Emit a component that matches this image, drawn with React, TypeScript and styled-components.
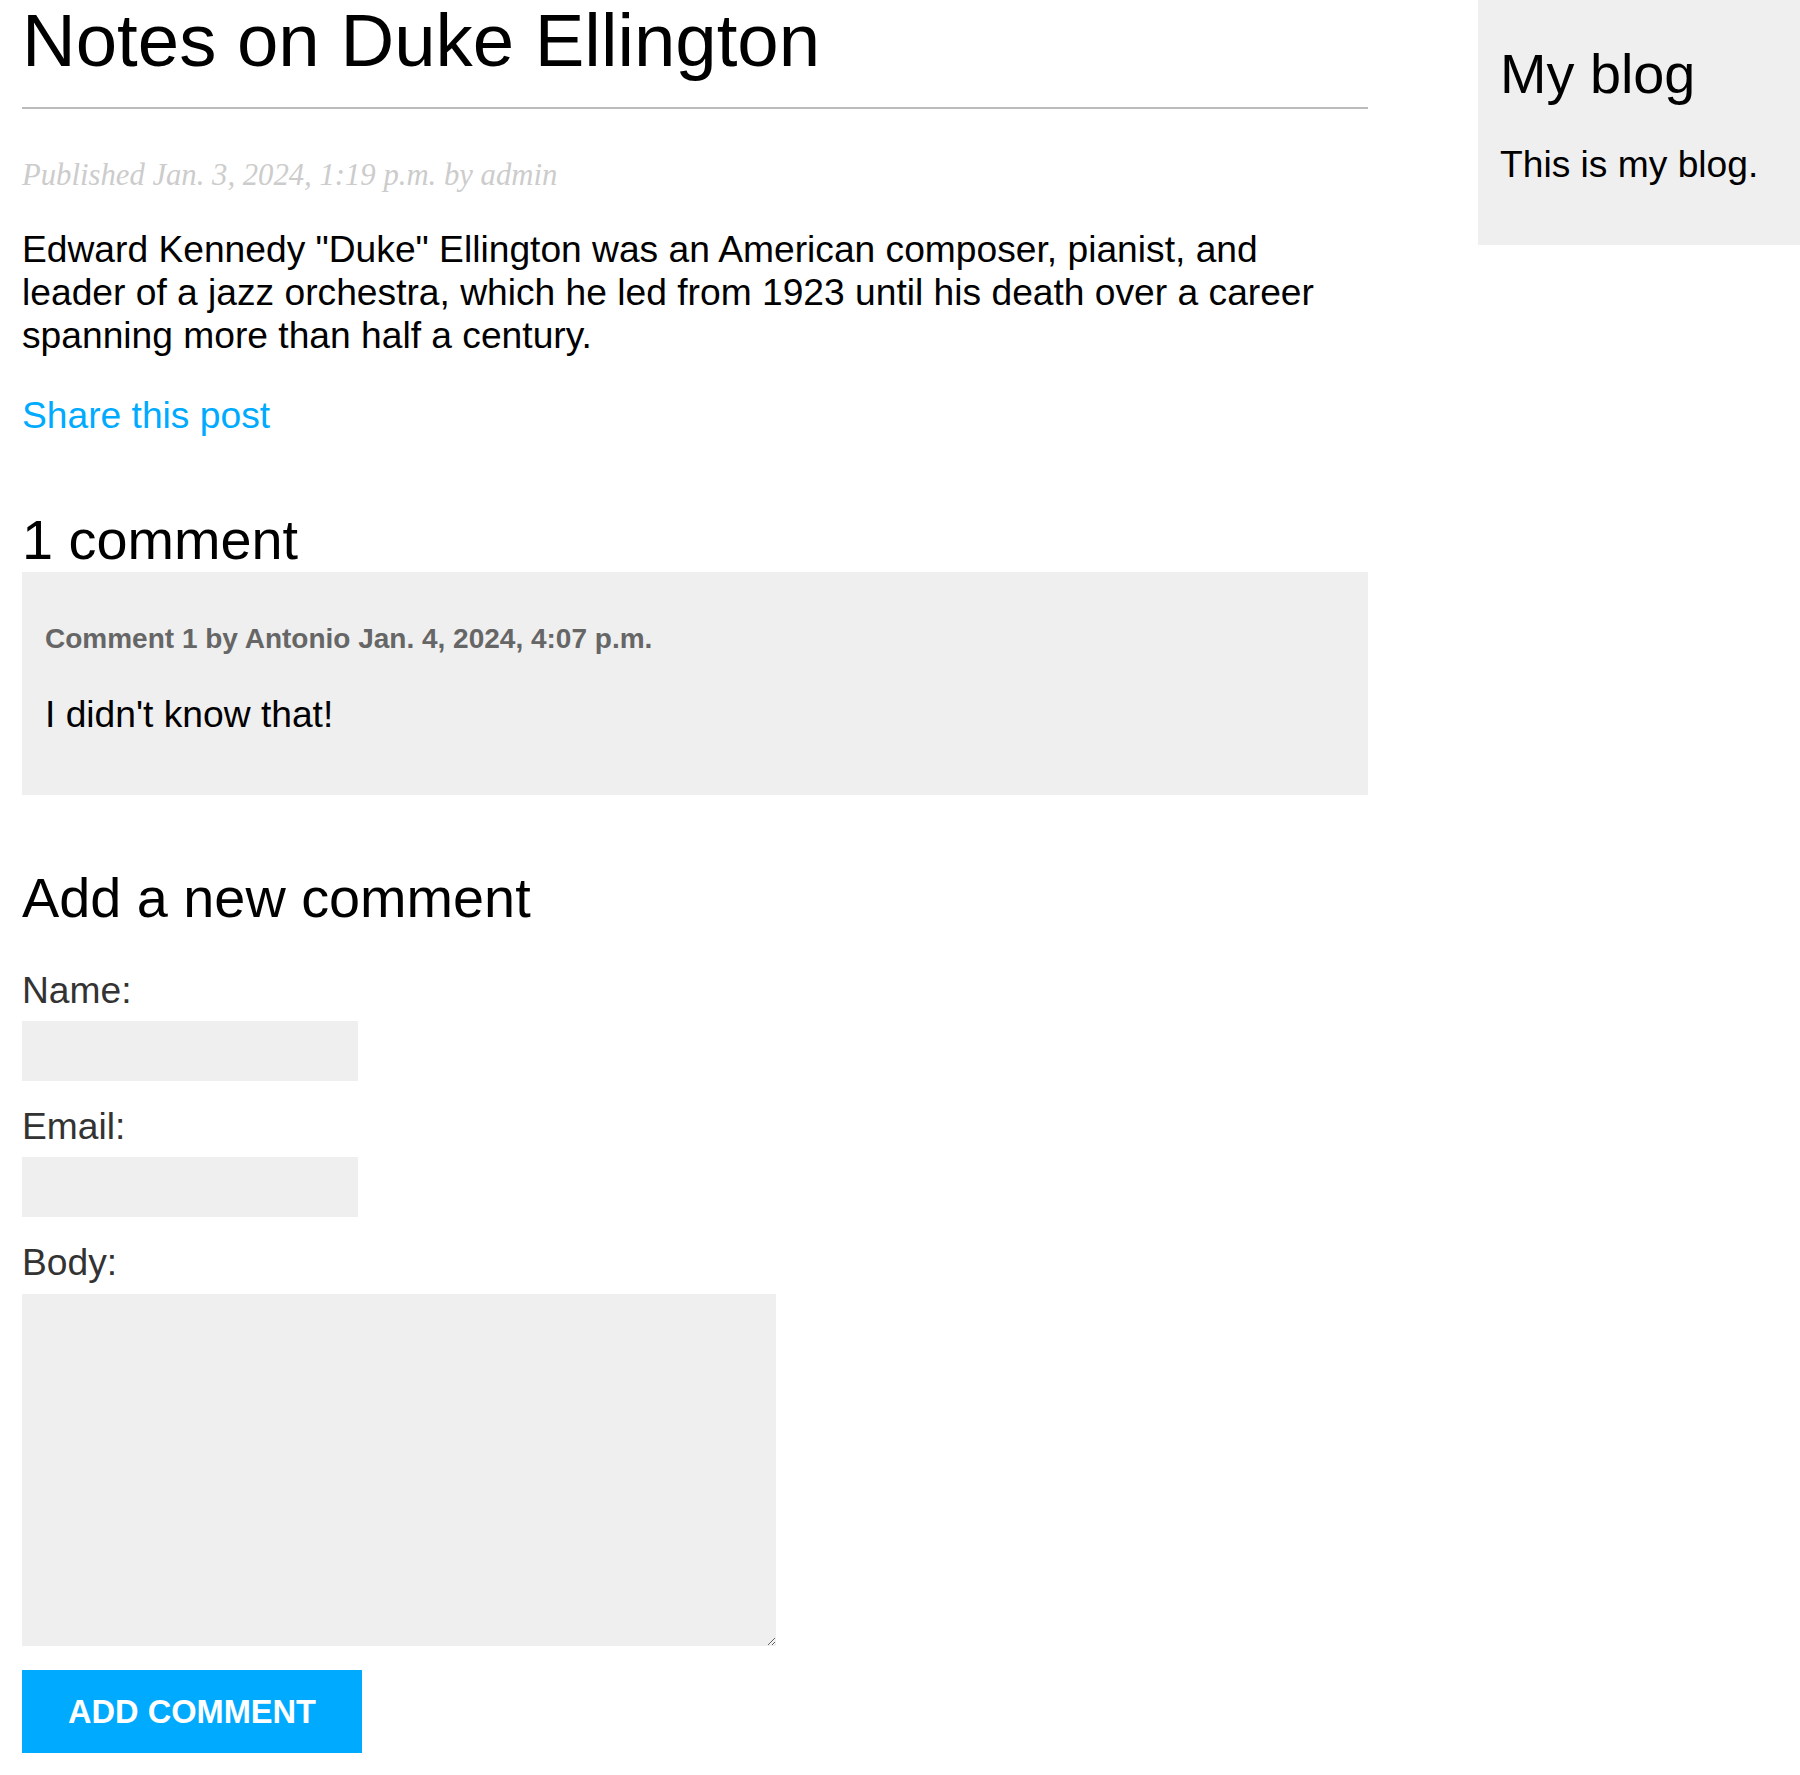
import React from 'react';
import styled, { createGlobalStyle } from 'styled-components';

const GlobalStyle = createGlobalStyle`
  body {
    margin: 0;
    padding: 0;
    background: #fff;
    font-family: 'Liberation Sans', Arial, Helvetica, sans-serif;
    color: #000;
  }
`;

export default function App() {
  return (
    <>
      <GlobalStyle />
      <Page>
        <Content>
          <Title>Notes on Duke Ellington</Title>
          <DateLine>Published Jan. 3, 2024, 1:19 p.m. by admin</DateLine>
          <Body>
            Edward Kennedy "Duke" Ellington was an American composer, pianist,
            and leader of a jazz orchestra, which he led from 1923 until his
            death over a career spanning more than half a century.
          </Body>
          <ShareLink href="#">Share this post</ShareLink>

          <Heading>1 comment</Heading>
          <Comment>
            <CommentInfo>Comment 1 by Antonio Jan. 4, 2024, 4:07 p.m.</CommentInfo>
            <CommentBody>I didn't know that!</CommentBody>
          </Comment>

          <Heading>Add a new comment</Heading>
          <Form onSubmit={(e) => e.preventDefault()}>
            <Label htmlFor="name">Name:</Label>
            <TextInput id="name" type="text" />
            <Label htmlFor="email">Email:</Label>
            <TextInput id="email" type="email" />
            <Label htmlFor="body">Body:</Label>
            <TextArea id="body" />
            <SubmitButton type="submit">Add comment</SubmitButton>
          </Form>
        </Content>

        <Sidebar>
          <SidebarTitle>My blog</SidebarTitle>
          <SidebarText>This is my blog.</SidebarText>
        </Sidebar>
      </Page>
    </>
  );
}

const Page = styled.div`
  display: flex;
  justify-content: space-between;
  align-items: flex-start;
  padding-left: 22px;
  width: 1800px;
  box-sizing: border-box;
`;

const Content = styled.main`
  width: 1346px;
  display: flex;
  flex-direction: column;
  align-items: flex-start;
  padding-bottom: 23px;
`;

const Title = styled.h1`
  align-self: stretch;
  margin: 0;
  font-size: 74.4px;
  line-height: 82px;
  font-weight: normal;
  padding-bottom: 25px;
  border-bottom: 2px solid #bbb;
`;

const DateLine = styled.p`
  margin: 48px 0 0;
  font-family: 'Liberation Serif', Georgia, serif;
  font-style: italic;
  font-size: 30.7px;
  line-height: 36px;
  color: #ccc;
`;

const Body = styled.p`
  margin: 35px 0 0;
  font-size: 37.2px;
  line-height: 43px;
`;

const ShareLink = styled.a`
  margin-top: 37px;
  font-size: 37.2px;
  line-height: 43px;
  color: #00abff;
  text-decoration: none;
`;

const Heading = styled.h2`
  margin: 71px 0 1px;
  font-size: 55.8px;
  line-height: 63px;
  font-weight: normal;
`;

const Comment = styled.div`
  align-self: stretch;
  background: #efefef;
  padding: 22px 23px 23px;
  height: 223px;
  box-sizing: border-box;
`;

const CommentInfo = styled.p`
  margin: 29px 0 0;
  font-size: 28px;
  line-height: 32px;
  font-weight: bold;
  color: #666;
`;

const CommentBody = styled.p`
  margin: 38px 0 0;
  font-size: 37.2px;
  line-height: 43px;
`;

const Form = styled.form`
  display: flex;
  flex-direction: column;
  align-items: flex-start;
`;

const Label = styled.label`
  margin-top: 24px;
  font-size: 37.2px;
  line-height: 43px;
  color: #333;

  &:first-child {
    margin-top: 39px;
  }
`;

const TextInput = styled.input`
  margin-top: 9px;
  width: 336px;
  height: 60px;
  box-sizing: border-box;
  border: 0;
  background: #efefef;
  padding: 0 16px;
  font-family: inherit;
  font-size: 30px;
`;

const TextArea = styled.textarea`
  margin-top: 10px;
  width: 754px;
  height: 352px;
  box-sizing: border-box;
  border: 0;
  background: #efefef;
  padding: 16px;
  font-family: inherit;
  font-size: 30px;
`;

const SubmitButton = styled.button`
  margin-top: 24px;
  width: 340px;
  height: 83px;
  border: 0;
  background: #00abff;
  color: #fff;
  font-family: inherit;
  font-weight: bold;
  font-size: 32.6px;
  text-transform: uppercase;
  cursor: pointer;
`;

const Sidebar = styled.aside`
  width: 322px;
  height: 245px;
  box-sizing: border-box;
  background: #efefef;
  padding: 42px 22px 0;
`;

const SidebarTitle = styled.h2`
  margin: 0;
  font-size: 55.8px;
  line-height: 63px;
  font-weight: normal;
`;

const SidebarText = styled.p`
  margin: 38px 0 0;
  font-size: 37.2px;
  line-height: 43px;
`;
